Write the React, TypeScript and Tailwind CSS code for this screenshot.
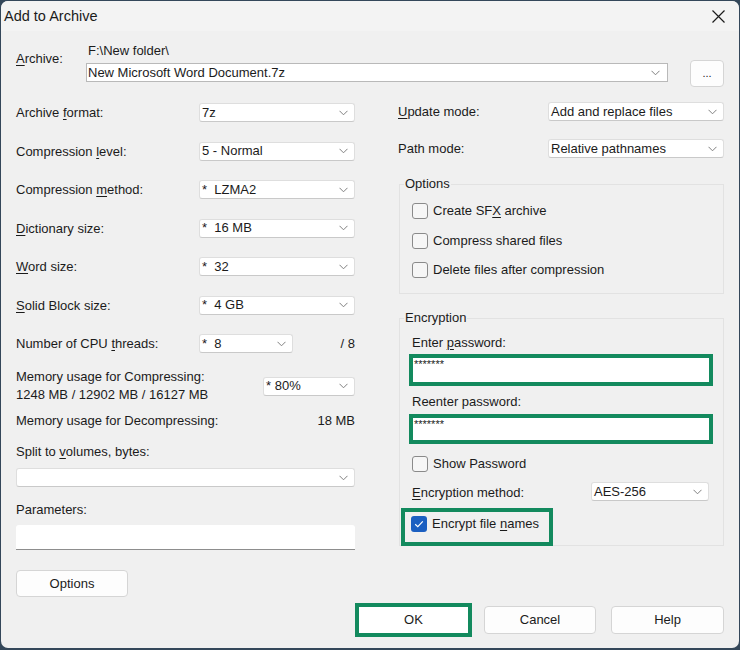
import React from "react";

const font = { fontFamily: '"Liberation Sans", Arial, sans-serif' };

function Chevron() {
  return (
    <svg width="9" height="6" viewBox="0 0 9 6" className="shrink-0">
      <path d="M0.5 0.8 L4.5 4.8 L8.5 0.8" fill="none" stroke="#808080" strokeWidth="1" />
    </svg>
  );
}

function Combo({ value, className = "" }: { value?: string; className?: string }) {
  return (
    <div
      className={`h-[19px] bg-white border border-[#dedede] border-b-[#c9c9c9] rounded-[3px] flex items-center justify-between pl-[2px] pr-[6px] ${className}`}
    >
      <span className="whitespace-pre leading-[16px]">{value}</span>
      <Chevron />
    </div>
  );
}

function U({ children }: { children: React.ReactNode }) {
  return <span className="underline underline-offset-[2px] decoration-[1px]">{children}</span>;
}

function Row({ label, children }: { label: React.ReactNode; children: React.ReactNode }) {
  return (
    <div className="h-[19px] flex items-center justify-between">
      <span className="leading-[16px] pt-[1px]">{label}</span>
      {children}
    </div>
  );
}

function Check({ checked = false }: { checked?: boolean }) {
  return checked ? (
    <div className="w-[16px] h-[16px] rounded-[3px] bg-[#1b5fc1] flex items-center justify-center shrink-0">
      <svg width="10" height="8" viewBox="0 0 10 8">
        <path d="M1.2 4.2 L3.8 6.6 L8.8 1.4" fill="none" stroke="white" strokeWidth="1.2" />
      </svg>
    </div>
  ) : (
    <div className="w-[16px] h-[16px] rounded-[3px] border border-[#8a8a8a] bg-[#f6f6f6] shrink-0" />
  );
}

function CheckRow({ label, checked }: { label: React.ReactNode; checked?: boolean }) {
  return (
    <div className="h-[16px] flex items-center gap-[5px]">
      <Check checked={checked} />
      <span className="leading-[16px]">{label}</span>
    </div>
  );
}

function Btn({ children, className = "" }: { children: React.ReactNode; className?: string }) {
  return (
    <div
      className={`bg-[#fdfdfd] border border-[#d5d5d5] rounded-[4px] flex items-center justify-center ${className}`}
    >
      {children}
    </div>
  );
}

export default function App() {
  return (
    <div
      className="w-[740px] h-[650px] bg-[#34475a] px-px pt-px pb-[2px] text-[13px] text-[#1b1b1b]"
      style={font}
    >
      <div className="h-full rounded-[7px] bg-[#f0f0f0] flex flex-col overflow-hidden">
        {/* Title bar */}
        <div className="h-[30px] shrink-0 bg-[#f3f3f3] flex items-center justify-between pl-[3px] pr-[14px]">
          <span className="text-[14.5px] leading-[18px]">Add to Archive</span>
          <svg width="13" height="13" viewBox="0 0 13 13">
            <path d="M0.5 0.5 L12.5 12.5 M12.5 0.5 L0.5 12.5" stroke="#1b1b1b" strokeWidth="1.2" />
          </svg>
        </div>

        <div className="px-[15px] flex flex-col">
          {/* Archive row */}
          <div className="flex items-start pt-[12px]">
            <span className="w-[70px] mt-[8px] leading-[16px]">
              <U>A</U>rchive:
            </span>
            <div className="flex-1 flex flex-col">
              <span className="pl-[2px] leading-[16px]">F:\New folder\</span>
              <div className="mt-[4px] h-[19px] bg-white border border-[#b9b9b9] flex items-center justify-between pl-[1px] pr-[7px]">
                <span className="leading-[16px]">New Microsoft Word Document.7z</span>
                <Chevron />
              </div>
            </div>
            <Btn className="ml-[22px] mt-[17px] w-[34px] h-[27px]">
              <span className="text-[11px] leading-[10px] pb-[2px]">...</span>
            </Btn>
          </div>

          {/* Main two columns */}
          <div className="flex mt-[15px]">
            {/* Left column */}
            <div className="w-[339px] flex flex-col pt-[1px]">
              <div className="flex flex-col gap-[19.5px]">
                <Row label={<>Archive <U>f</U>ormat:</>}>
                  <Combo value="7z" className="w-[156px]" />
                </Row>
                <Row label={<>Compression <U>l</U>evel:</>}>
                  <Combo value="5 - Normal" className="w-[156px]" />
                </Row>
                <Row label={<>Compression <U>m</U>ethod:</>}>
                  <Combo value="*  LZMA2" className="w-[156px]" />
                </Row>
                <Row label={<><U>D</U>ictionary size:</>}>
                  <Combo value="*  16 MB" className="w-[156px]" />
                </Row>
                <Row label={<><U>W</U>ord size:</>}>
                  <Combo value="*  32" className="w-[156px]" />
                </Row>
                <Row label={<><U>S</U>olid Block size:</>}>
                  <Combo value="*  4 GB" className="w-[156px]" />
                </Row>
                <div className="h-[19px] flex items-center">
                  <span className="leading-[16px] pt-[1px] w-[183px]">
                    Number of CPU <U>t</U>hreads:
                  </span>
                  <Combo value="*  8" className="w-[94px]" />
                  <span className="ml-auto leading-[16px] pt-[1px]">/ 8</span>
                </div>
              </div>

              <div className="mt-[15px] flex items-center justify-between">
                <span className="leading-[18px]">
                  Memory usage for Compressing:
                  <br />
                  1248 MB / 12902 MB / 16127 MB
                </span>
                <Combo value="* 80%" className="w-[92px]" />
              </div>

              <div className="mt-[8px] flex justify-between leading-[18px]">
                <span>Memory usage for Decompressing:</span>
                <span>18 MB</span>
              </div>

              <span className="mt-[13px] leading-[18px]">
                Split to <U>v</U>olumes, bytes:
              </span>
              <Combo className="mt-[7px] w-full" />

              <span className="mt-[14px] leading-[18px]">Parameters:</span>
              <div className="mt-[6px] h-[25px] bg-white border-b border-[#8d8d8d] rounded-t-[3px]" />

              <Btn className="mt-[20px] w-[112px] h-[27px]">Options</Btn>
            </div>

            {/* Right column */}
            <div className="ml-auto w-[326px] flex flex-col">
              <Row label={<><U>U</U>pdate mode:</>}>
                <Combo value="Add and replace files" className="w-[176px]" />
              </Row>
              <div className="mt-[18px]">
                <Row label="Path mode:">
                  <Combo value="Relative pathnames" className="w-[176px]" />
                </Row>
              </div>

              <fieldset className="min-w-0 mt-[18px] ml-[1px] border border-[#e2e2e2] pl-[12px] pr-[14px] pb-[15px]">
                <legend className="ml-[-8px] px-[1px] leading-[16px]">Options</legend>
                <div className="mt-[11px] flex flex-col gap-[13.5px]">
                  <CheckRow label={<>Create SF<U>X</U> archive</>} />
                  <CheckRow label="Compress shared files" />
                  <CheckRow label="Delete files after compression" />
                </div>
              </fieldset>

              <fieldset className="min-w-0 mt-[16px] ml-[1px] border border-[#e2e2e2] pl-[12px] pr-[14px] pb-0">
                <legend className="ml-[-8px] px-[1px] leading-[16px]">Encryption</legend>
                <div className="flex flex-col">
                  <span className="mt-[9px] leading-[16px]">
                    Enter <U>p</U>assword:
                  </span>
                  <div className="mt-[3px] ml-[-3px] w-[304px] h-[32px] shrink-0 border-[4px] border-[#138a5e] bg-white pl-[1px]">
                    <span className="text-[11px] leading-[12px] block">*******</span>
                  </div>
                  <span className="mt-[8px] leading-[16px]">Reenter password:</span>
                  <div className="mt-[4px] ml-[-3px] w-[304px] h-[30px] shrink-0 border-[4px] border-[#138a5e] bg-white pl-[1px]">
                    <span className="text-[11px] leading-[12px] block">*******</span>
                  </div>
                  <div className="mt-[12px]">
                    <CheckRow label="Show Password" />
                  </div>
                  <div className="mt-[10px] h-[19px] flex items-center justify-between">
                    <span className="leading-[16px] pt-[3px]">
                      <U>E</U>ncryption method:
                    </span>
                    <Combo value="AES-256" className="w-[118px]" />
                  </div>
                  <div className="mt-[7px] ml-[-11px] mb-[-1px] w-[152px] h-[38px] border-[4px] border-[#138a5e] pl-[6px] pt-[4px]">
                    <CheckRow checked label={<>Encrypt file <U>n</U>ames</>} />
                  </div>
                </div>
              </fieldset>
            </div>
          </div>

          {/* Footer buttons */}
          <div className="mt-[6px] flex items-center justify-end">
            <div className="w-[117px] h-[34px] border-[4px] border-[#138a5e] bg-white flex items-center justify-center">
              OK
            </div>
            <Btn className="ml-[12px] w-[112px] h-[28px]">Cancel</Btn>
            <Btn className="ml-[15px] w-[113px] h-[28px]">Help</Btn>
          </div>
        </div>
      </div>
    </div>
  );
}
